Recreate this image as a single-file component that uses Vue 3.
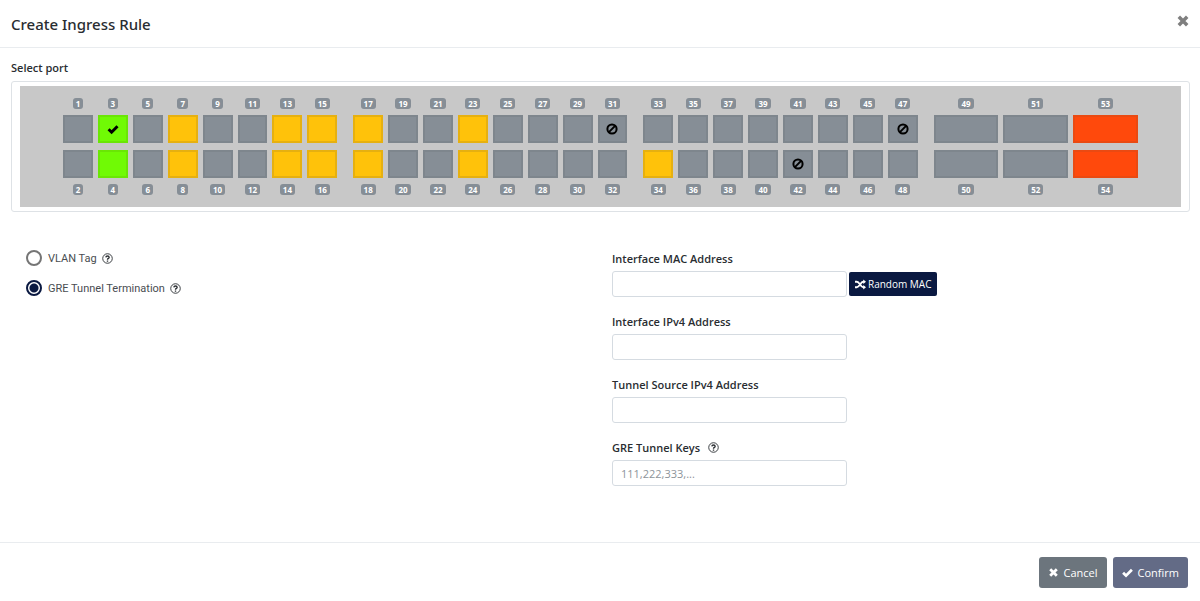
<template>
  <form class="modal" @submit.prevent>
    <header class="modal-header">
      <h1>Create Ingress Rule</h1>
      <button type="button" class="close" aria-label="Close">
        <svg viewBox="0 0 12 12"><path d="M2.4 2.4l7.2 7.2M9.6 2.4l-7.2 7.2" /></svg>
      </button>
    </header>

    <main class="modal-body">
      <h2>Select port</h2>
      <div class="switch-frame">
        <div class="switch">
          <div v-for="(group, g) in groups" :key="g" class="port-group">
            <div v-for="n in group" :key="n" class="port-column">
              <label class="badge" :for="'port-' + n">{{ n }}</label>
              <button
                v-for="p in [n, n + 1]"
                :id="'port-' + p"
                :key="p"
                type="button"
                class="port"
                :class="colors[p]"
                @click="selectPort(p)"
              >
                <svg v-if="p === selected" class="port-icon" viewBox="0 0 12 12">
                  <path class="check" d="M1.6 6.2l3 3 5.9-5.9" />
                </svg>
                <svg v-else-if="blocked.includes(p)" class="port-icon" viewBox="0 0 12 12">
                  <circle cx="6" cy="6" r="4.6" />
                  <path d="M2.9 9.1l6.2-6.2" />
                </svg>
              </button>
              <label class="badge" :for="'port-' + (n + 1)">{{ n + 1 }}</label>
            </div>
          </div>
        </div>
      </div>

      <div class="settings">
        <div class="types">
          <div v-for="t in types" :key="t.value" class="type">
            <input :id="t.value" v-model="type" type="radio" name="type" :value="t.value" />
            <label :for="t.value">{{ t.label }}</label>
            <svg class="help" viewBox="0 0 12 12">
              <circle cx="6" cy="6" r="5.2" />
              <path class="mark" d="M4.2 4.8c.1-2.1 3.6-2.1 3.6 0C7.8 6 6 5.9 6 7.3M6 8.1v1.4" />
            </svg>
          </div>
        </div>

        <div class="fields">
          <div v-for="f in fields" :key="f.id" class="field">
            <div class="field-label">
              <label :for="f.id">{{ f.label }}</label>
              <svg v-if="f.help" class="help" viewBox="0 0 12 12">
                <circle cx="6" cy="6" r="5.2" />
                <path class="mark" d="M4.2 4.8c.1-2.1 3.6-2.1 3.6 0C7.8 6 6 5.9 6 7.3M6 8.1v1.4" />
              </svg>
            </div>
            <div class="field-row">
              <input :id="f.id" v-model="form[f.id]" type="text" :placeholder="f.placeholder" />
              <button v-if="f.id === 'mac'" type="button" class="random" @click="randomMac">
                <svg viewBox="0 0 12 12">
                  <path d="M0 3h2c3 0 4 6 7 6h1M0 9h2c3 0 4-6 7-6h1" />
                  <path class="arrow" d="M9 .6L12 3 9 5.4zM9 6.6L12 9l-3 2.4z" />
                </svg>
                Random MAC
              </button>
            </div>
          </div>
        </div>
      </div>
    </main>

    <footer class="modal-footer">
      <button type="button" class="cancel">
        <svg viewBox="0 0 12 12"><path d="M2.4 2.4l7.2 7.2M9.6 2.4l-7.2 7.2" /></svg>
        Cancel
      </button>
      <button type="submit" class="confirm">
        <svg viewBox="0 0 12 12"><path d="M1.2 6.2l3.2 3.2 6.4-6.4" /></svg>
        Confirm
      </button>
    </footer>
  </form>
</template>

<script setup>
import { reactive, ref } from 'vue'

// odd port numbers, the even one sits below
const groups = [
  [1, 3, 5, 7, 9, 11, 13, 15],
  [17, 19, 21, 23, 25, 27, 29, 31],
  [33, 35, 37, 39, 41, 43, 45, 47],
  [49, 51, 53]
]
const blocked = [31, 42, 47]
const colors = { 3: 'green', 4: 'green', 53: 'red', 54: 'red' }
for (const p of [7, 8, 13, 14, 15, 16, 17, 18, 23, 24, 34]) colors[p] = 'amber'

const types = [
  { value: 'vlan', label: 'VLAN Tag' },
  { value: 'gre', label: 'GRE Tunnel Termination' }
]
const fields = [
  { id: 'mac', label: 'Interface MAC Address' },
  { id: 'ip', label: 'Interface IPv4 Address' },
  { id: 'source', label: 'Tunnel Source IPv4 Address' },
  { id: 'keys', label: 'GRE Tunnel Keys', help: true, placeholder: '111,222,333,...' }
]

const selected = ref(3)
const type = ref('gre')
const form = reactive({ mac: '', ip: '', source: '', keys: '' })

function selectPort(p) {
  if (!blocked.includes(p)) selected.value = p
}

function randomMac() {
  const bytes = Array.from({ length: 5 }, () => Math.floor(Math.random() * 256))
  form.mac = [2, ...bytes].map(b => b.toString(16).padStart(2, '0')).join(':')
}
</script>

<style>
body {
  margin: 0;
  background: #fff;
}
</style>

<style scoped>
* {
  box-sizing: border-box;
}
.modal {
  display: flex;
  flex-direction: column;
  min-height: 100vh;
  color: #292d31;
  font-family: "Open Sans", "Noto Sans", sans-serif;
  font-size: 11px;
}
button,
input {
  margin: 0;
  font-family: inherit;
}
button {
  cursor: pointer;
}
svg {
  display: block;
  flex: none;
  width: 12px;
  height: 12px;
  fill: none;
  stroke: currentColor;
  stroke-width: 3;
}
.modal-header {
  display: flex;
  align-items: center;
  justify-content: space-between;
  height: 48px;
  padding: 0 10px 0 11px;
  border-bottom: 1px solid #e9ecef;
}
h1 {
  margin: 0;
  font-family: "Noto Sans", sans-serif;
  font-size: 15px;
  line-height: 24px;
  font-weight: 500;
}
.close {
  padding: 0 0 6px;
  border: none;
  background: none;
  color: #7f7f7f;
}
.close svg {
  width: 14px;
  height: 14px;
}
.modal-body {
  flex: 1;
  padding: 12px 10px 12px 11px;
}
h2 {
  margin: 0 0 5px;
  font-size: 11px;
  line-height: 16px;
  font-weight: 600;
}
.switch-frame {
  padding: 4px 8px;
  border: 1px solid #dee2e6;
  border-radius: 3px;
}
.switch {
  display: grid;
  grid-template-columns: 275fr 275fr 275fr 205fr;
  gap: 16px;
  padding: 12px 43px;
  background: #c8c8c8;
}
.port-group {
  display: flex;
  gap: 5px;
}
.port-column {
  display: flex;
  flex: 1;
  flex-direction: column;
  align-items: center;
  gap: 6px;
}
.badge {
  padding: 0 3px;
  border-radius: 3px;
  background: #868e96;
  color: #fff;
  font-size: 8px;
  line-height: 11px;
  font-weight: 700;
}
.port {
  display: flex;
  align-items: center;
  justify-content: center;
  width: 100%;
  height: 28px;
  padding: 0;
  border: 2px solid #7e868d;
  background: #868e96;
  color: #000;
}
.port + .port {
  margin-top: 1px;
}
.port.green {
  border-color: #6ae605;
  background: #70fa05;
}
.port.amber {
  border-color: #e6b010;
  background: #ffc20a;
}
.port.red {
  border-color: #ea4a12;
  background: #ff490c;
}
.port-icon {
  stroke-width: 2;
}
.port-icon .check {
  stroke-width: 3;
}
.settings {
  display: grid;
  grid-template-columns: 1fr 1fr;
  gap: 23px;
  margin-top: 38px;
}
.types {
  display: flex;
  flex-direction: column;
  gap: 14px;
  padding-left: 15px;
  font-family: Roboto, sans-serif;
}
.type {
  display: flex;
  align-items: center;
  height: 16px;
  color: #494d51;
}
.type input {
  appearance: none;
  width: 16px;
  height: 16px;
  margin-right: 6px;
  border: 2px solid #757575;
  border-radius: 50%;
}
.type input:checked {
  border-color: #0a1941;
  background: radial-gradient(#0a1941 4px, transparent 5px);
}
.help {
  width: 11px;
  height: 11px;
  margin-left: 5px;
  color: #2c3034;
  stroke-width: 1;
}
.help .mark {
  stroke-width: 1.5;
}
.fields {
  display: flex;
  flex-direction: column;
  gap: 16px;
}
.field-label {
  display: flex;
  align-items: center;
  gap: 3px;
  height: 16px;
  margin-bottom: 5px;
  font-weight: 600;
}
.field-row {
  display: flex;
  align-items: center;
  gap: 2px;
}
.field-row input {
  width: 235px;
  height: 26px;
  padding: 0 8px;
  border: 1px solid #d5dbe1;
  border-radius: 3px;
  background: #fff;
  color: #495057;
  font-size: 11px;
}
.field-row input::placeholder {
  color: #8d949a;
}
.random {
  display: flex;
  align-items: center;
  gap: 2px;
  height: 24px;
  padding: 0 6px;
  border: none;
  border-radius: 2px;
  background: #0a1941;
  color: #fff;
  font-size: 10px;
}
.random svg {
  width: 11px;
  height: 11px;
  stroke-width: 2;
}
.random .arrow {
  fill: currentColor;
  stroke: none;
}
.modal-footer {
  display: flex;
  align-items: flex-start;
  justify-content: flex-end;
  gap: 6px;
  height: 59px;
  padding: 14px 12px;
  border-top: 1px solid #e9ecef;
}
.modal-footer button {
  display: flex;
  align-items: center;
  gap: 5px;
  height: 31px;
  padding: 0 9px;
  border: none;
  border-radius: 3px;
  color: #fff;
  font-size: 11px;
}
.modal-footer svg {
  width: 11px;
  height: 11px;
}
.cancel {
  background: #6c757d;
}
.confirm {
  background: #636b86;
}
</style>
